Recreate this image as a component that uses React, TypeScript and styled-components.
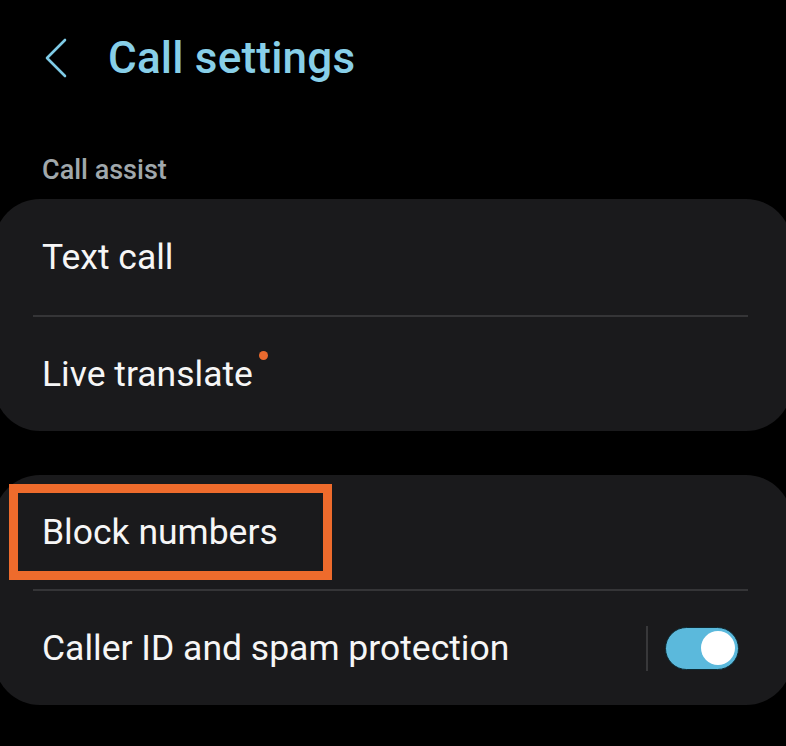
import React from 'react';
import styled, {createGlobalStyle} from "styled-components";

const GlobalStyle = createGlobalStyle`
  html, body {
    margin: 0;
    padding: 0;
    background: #000;
  }
  body {
    font-family: Roboto, "Liberation Sans", sans-serif;
    -webkit-font-smoothing: antialiased;
  }
`

//styles
const Page = styled.div`
  width: 786px;
  height: 746px;
  background: #000;
  overflow: hidden;
  display: flex;
  flex-direction: column;
`
const Header = styled.div`
  height: 116px;
  display: flex;
  align-items: center;
  padding-left: 45px;
  gap: 41px;
`
const BackButton = styled.div`
  width: 22px;
  height: 40px;
  display: flex;
  align-items: center;
  justify-content: center;
  cursor: pointer;
`
const Title = styled.h1`
  margin: 0;
  font-size: 44px;
  font-weight: 500;
  color: #88cfe8;
  letter-spacing: 0.2px;
`
const SectionLabel = styled.div`
  margin: 38px 0 13px 42px;
  height: 32px;
  line-height: 32px;
  font-size: 27px;
  font-weight: 500;
  color: #a0a8ac;
`
const Card = styled.div<{ $gap?: number }>`
  margin: ${p => p.$gap ?? 0}px -6px 0 -6px;
  background: #1a1a1c;
  border-radius: 46px;
  display: flex;
  flex-direction: column;
`
const Row = styled.div<{ $h: number }>`
  position: relative;
  height: ${p => p.$h}px;
  display: flex;
  align-items: center;
  padding: 0 53px 0 48px;
`
const Label = styled.span`
  flex: 1;
  font-size: 35.5px;
  line-height: 42px;
  color: #f6f6f6;
`
const Dot = styled.span`
  display: inline-block;
  width: 9px;
  height: 9px;
  margin-left: 6px;
  border-radius: 50%;
  background: #e8692e;
  vertical-align: top;
  transform: translateY(-2px);
`
const Divider = styled.div`
  height: 2px;
  margin: 0 44px 0 39px;
  background: #353537;
`
const Highlight = styled.div`
  position: absolute;
  left: 15px;
  top: 9px;
  width: 323px;
  height: 96px;
  box-sizing: border-box;
  border: 9px solid #ee6b2c;
  pointer-events: none;
`
const ControlGroup = styled.div`
  display: flex;
  align-items: center;
  gap: 17px;
`
const VLine = styled.div`
  width: 2px;
  height: 45px;
  background: #38383a;
`
const Switch = styled.div<{ $on: boolean }>`
  width: 74px;
  height: 43px;
  box-sizing: border-box;
  border-radius: 22px;
  border: 1px solid #0d2a33;
  background: ${p => p.$on ? "#5bb9dc" : "#555"};
  display: flex;
  align-items: center;
  justify-content: ${p => p.$on ? "flex-end" : "flex-start"};
  padding: 0 3px;
`
const Knob = styled.div`
  width: 34px;
  height: 34px;
  border-radius: 50%;
  background: #fff;
`

const App = () => {
    return (
        <Page>
            <GlobalStyle/>
            <Header>
                <BackButton>
                    <svg width="22" height="40" viewBox="0 0 22 40" fill="none">
                        <path d="M20 2 L2 20 L20 38" stroke="#7fcbe6" strokeWidth="2.6"
                              strokeLinecap="round" strokeLinejoin="round"/>
                    </svg>
                </BackButton>
                <Title>Call settings</Title>
            </Header>

            <SectionLabel>Call assist</SectionLabel>
            <Card>
                <Row $h={116}>
                    <Label>Text call</Label>
                </Row>
                <Divider/>
                <Row $h={114}>
                    <Label>Live translate<Dot/></Label>
                </Row>
            </Card>

            <Card $gap={44}>
                <Row $h={114}>
                    <Label>Block numbers</Label>
                    <Highlight/>
                </Row>
                <Divider/>
                <Row $h={114}>
                    <Label>Caller ID and spam protection</Label>
                    <ControlGroup>
                        <VLine/>
                        <Switch $on={true}>
                            <Knob/>
                        </Switch>
                    </ControlGroup>
                </Row>
            </Card>
        </Page>
    )
};

export default App;
